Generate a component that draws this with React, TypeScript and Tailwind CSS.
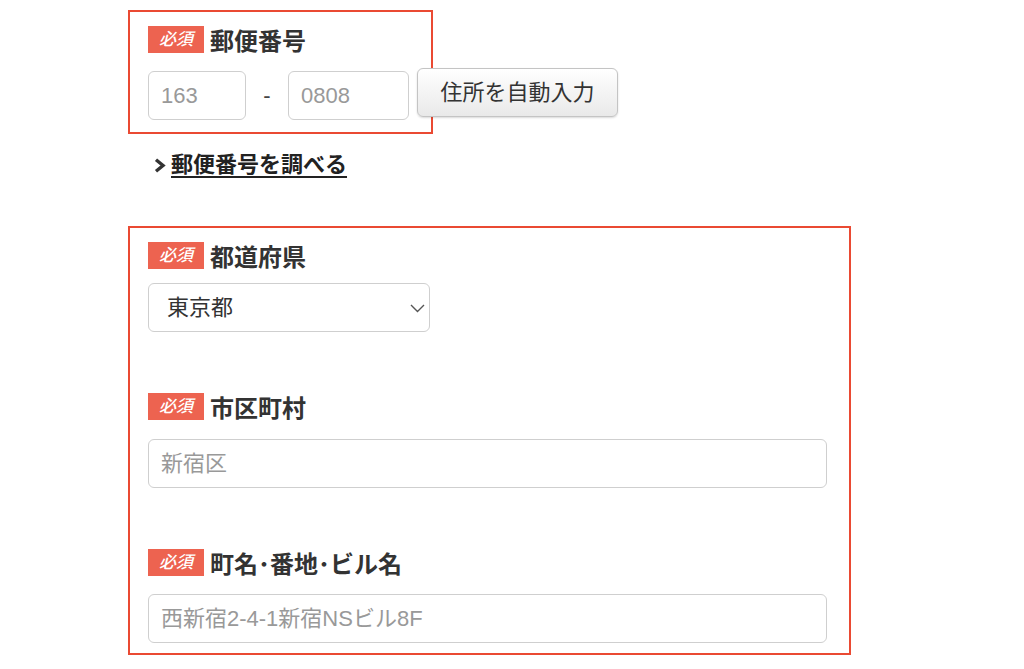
import React from "react"

const FONT = "font-['Liberation_Sans','Noto_Sans_CJK_JP',sans-serif]"

function Badge() {
  return (
    <span className="flex h-[27px] w-[56px] shrink-0 items-center justify-center bg-[#ed6350] text-[17px] leading-none font-medium italic text-white">
      必須
    </span>
  )
}

function FieldLabel({ text }: { text: string }) {
  return (
    <div className="flex h-[27px] items-center gap-[6px]">
      <Badge />
      <span className="mt-[5px] text-[24px] leading-none font-bold text-[#333]">{text}</span>
    </div>
  )
}

function TextBox({ placeholder, className }: { placeholder: string; className: string }) {
  return (
    <input
      readOnly
      placeholder={placeholder}
      className={`h-[49px] rounded-[6px] border border-[#cfcfcf] bg-white pl-[12px] text-[22px] text-[#333] outline-none placeholder:text-[#999] ${className}`}
    />
  )
}

export default function App() {
  return (
    <div className={`min-h-screen w-full bg-white pl-[128px] pt-[10px] ${FONT}`}>
      {/* postal code */}
      <div className="h-[124px] w-[305px] border-2 border-[#ea4a33] pl-[18px] pt-[14px]">
        <FieldLabel text="郵便番号" />
        <div className="mt-[15px] flex w-max items-start">
          <TextBox placeholder="163" className="mt-[3px] w-[98px]" />
          <span className="mt-[3px] flex h-[49px] w-[42px] items-center justify-center text-[22px] text-[#444]">-</span>
          <TextBox placeholder="0808" className="mt-[3px] w-[121px]" />
          <button className="ml-[8px] h-[49px] w-[201px] rounded-[6px] border border-[#c4c4c4] bg-gradient-to-b from-white to-[#e9e9e9] text-[22px] text-[#333] shadow-[0_1px_2px_rgba(0,0,0,0.15)]">
            住所を自動入力
          </button>
        </div>
      </div>

      <div className="mt-[16px] flex h-[30px] items-center pl-[26px]">
        <svg width="12" height="15" viewBox="0 0 12 15" className="shrink-0">
          <polyline points="2,1.8 9,7.5 2,13.2" fill="none" stroke="#333" strokeWidth="3.4" />
        </svg>
        <a className="ml-[5px] text-[22px] leading-none font-bold text-[#222] underline underline-offset-[4px]">
          郵便番号を調べる
        </a>
      </div>

      {/* address */}
      <div className="mt-[46px] w-[723px] border-2 border-[#ea4a33] pb-[10px] pl-[18px] pr-[22px] pt-[14px]">
        <FieldLabel text="都道府県" />
        <div className="relative mt-[14px] w-[282px]">
          <select className="h-[49px] w-full appearance-none rounded-[6px] border border-[#cfcfcf] bg-white pl-[18px] text-[22px] text-[#333] outline-none">
            <option>東京都</option>
          </select>
          <svg width="15" height="9" viewBox="0 0 15 9" className="pointer-events-none absolute right-[5px] top-[21px]">
            <polyline points="1,1 7.5,7.5 14,1" fill="none" stroke="#555" strokeWidth="1.4" />
          </svg>
        </div>

        <div className="mt-[61px]">
          <FieldLabel text="市区町村" />
        </div>
        <TextBox placeholder="新宿区" className="mt-[19px] w-full" />

        <div className="mt-[61px]">
          <FieldLabel text="町名･番地･ビル名" />
        </div>
        <TextBox placeholder="西新宿2-4-1新宿NSビル8F" className="mt-[18px] w-full" />
      </div>
    </div>
  )
}
